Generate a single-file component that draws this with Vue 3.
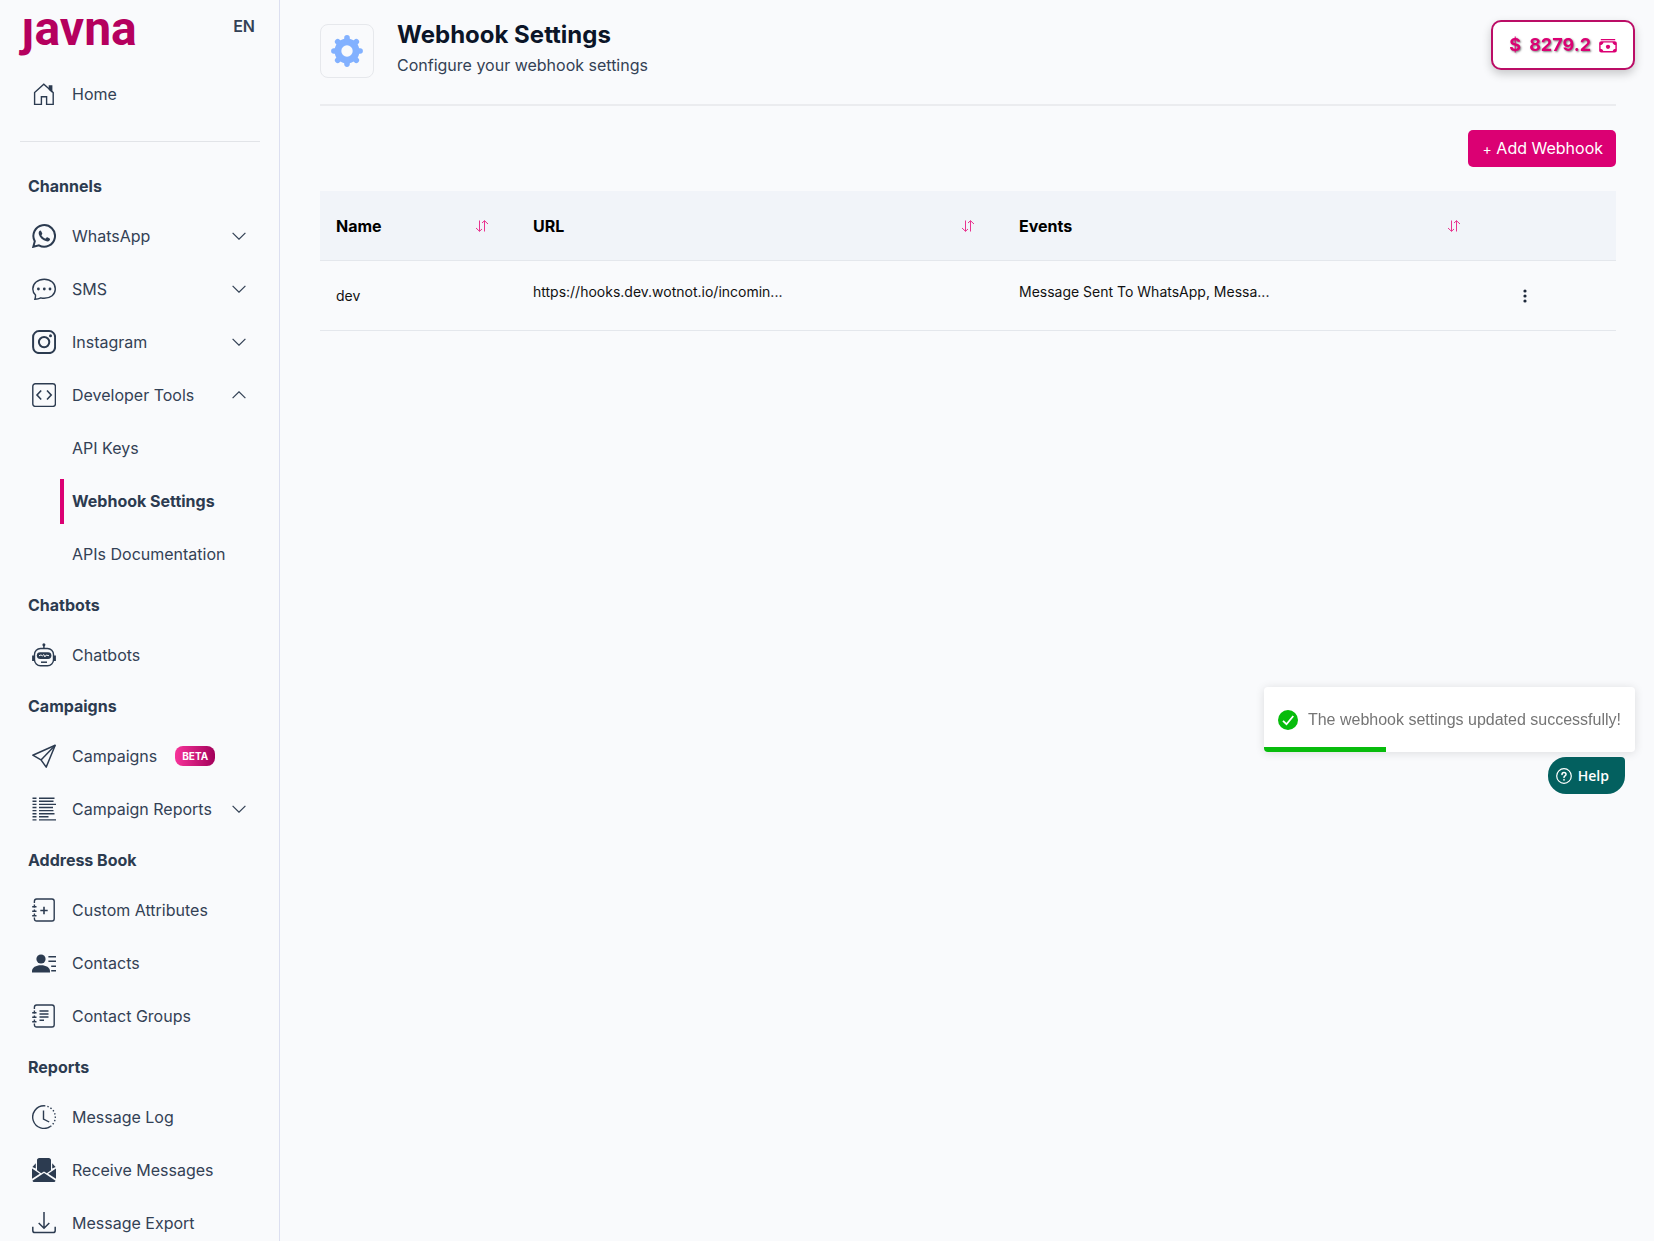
<script setup>
import { ref } from 'vue'

const icons = {
    home: '<path d="M2.6 22.4V10.6L11.8 2.3l9.4 8.3v11.8h-6.6v-7.6H9.4v7.6z"/><path d="M17.4 5.6V4h2.3v5.4l-2.3-2z" fill="currentColor"/>',
    whatsapp: '<path stroke-width="2" d="M1.3 22.8l1.5-5.6a10.8 10.8 0 1 1 4.1 4.1z"/><path fill="currentColor" stroke="none" d="M7.4 7.1c.6-.7 1.4-.7 1.8.1l1 2c.3.6-.1 1.1-.6 1.7-.3.4.1.9.8 1.7.8.9 1.7 1.5 2.6 1.9.5.2.8-.1 1.4-.8.4-.5.9-.4 1.5-.1l1.7.9c.7.4.5 1.1.1 1.7-.7 1-1.9 1.4-3.2 1.1-3.8-.9-6.7-3.7-7.6-6.8-.4-1.4-.2-2.6.5-3.4z"/>',
    sms: '<path d="M2.9 22.2c.5-1.5.7-2.9.6-4.2C1.7 16.3.8 14.2.8 12 .8 6.5 5.7 2.3 12.3 2.3S23.3 6.5 23.3 12s-4.7 9.3-11.2 9.3c-1.2 0-2.3-.2-3.3-.5-1.6.8-3.6 1.3-5.9 1.4z"/><g fill="currentColor" stroke="none"><circle cx="6.4" cy="12" r="1.4"/><circle cx="12.3" cy="12" r="1.4"/><circle cx="18" cy="12" r="1.4"/></g>',
    instagram: '<rect x="1.1" y="1.1" width="22" height="22" rx="6" stroke-width="2"/><circle cx="12.1" cy="12.1" r="5.2" stroke-width="2"/><circle cx="18.5" cy="5.7" r="1.5" fill="currentColor" stroke="none"/>',
    code: '<rect x=".8" y=".8" width="22.6" height="22.6" rx="2.5"/><path stroke-width="1.6" d="M9.2 7.5L5 12l4.2 4.5M15 7.5l4.2 4.5-4.2 4.5"/>',
    robot: '<rect x="2.5" y="5.5" width="19" height="17.2" rx="6"/><rect x="4.8" y="9.2" width="14.6" height="6.8" rx="3.4" fill="currentColor" stroke="none"/><path d="M11.9 1.5v4" stroke-width="1.5"/><circle cx="11.9" cy="1.8" r="1.5" fill="currentColor" stroke="none"/><path d="M1.1 12.5v5.5M22.9 12.5v5.5" stroke-width="2"/><path d="M9 19.2h6" stroke-width="1.5"/><path d="M7 12.8l2-.9 1.3 1 1.5-1.3 1.1 2.3 1.2-1.8 2.9.6" stroke="#f9fafc" stroke-width="1"/>',
    send: '<path stroke-linejoin="round" stroke-width="1.5" d="M.8 11.2L23.2 1.2 14.2 23.1 9 15.9z"/><path stroke-width="1.5" d="M9 15.9L23.2 1.2"/>',
    lines: '<path stroke-width="1.4" d="M.5 1.2h4M7 1.2h15.5M.5 4.3h4M7 4.3h14.5M.5 7.4h4M7 7.4h17M.5 10.5h4M7 10.5h14M.5 13.6h4M7 13.6h14.5M.5 16.7h4M7 16.7h15.5M.5 19.8h4M7 19.8h9.5M.5 22.9h4M7 22.9h17"/>',
    bookPlus: '<path d="M2.4 5V3.2c0-1.3.9-2.2 2.2-2.2h15.4c1.3 0 2.2.9 2.2 2.2v17.6c0 1.3-.9 2.2-2.2 2.2H4.6c-1.3 0-2.2-.9-2.2-2.2V19.4M2.4 6.5v3M2.4 11.5v2.3M2.4 15.5v2.3"/><path d="M.2 8.8h4.3M.2 13.3h4.3M.2 17.8h4.3" stroke-width="1.4"/><path d="M12 8.8v7.4M8.3 12.5h7.4" stroke-width="1.6"/>',
    contact: '<g fill="currentColor" stroke="none"><circle cx="9" cy="8" r="4.6"/><path d="M0 21.4v-1.2c0-3.6 3.9-5.9 9-5.9s9 2.3 9 5.9v1.2z"/></g><path d="M16.4 5.7H24M16.4 10.2H24M19.2 15.3H24M19.2 19.8H24" stroke-width="1.4"/>',
    bookLines: '<path d="M2.4 5V3.2c0-1.3.9-2.2 2.2-2.2h15.4c1.3 0 2.2.9 2.2 2.2v17.6c0 1.3-.9 2.2-2.2 2.2H4.6c-1.3 0-2.2-.9-2.2-2.2V19.4M2.4 6.5v3M2.4 11.5v2.3M2.4 15.5v2.3"/><path d="M.2 8.8h4.3M.2 13.3h4.3M.2 17.8h4.3" stroke-width="1.4"/><path d="M7.5 7h9M7.5 10h9M7.5 13h9M7.5 16.2h4.5"/>',
    clock: '<path d="M12 .8a11.3 11.3 0 1 0 6.7 20.4"/><path d="M12 .8a11.3 11.3 0 0 1 6.7 20.4" stroke-dasharray="1.4 2"/><path d="M11.5 5.5V14l5.7 3"/>',
    envelope: '<g fill="currentColor" stroke="none"><path d="M5 12.2V2.2C5 1 6 0 7.2 0h9.6C18 0 19 1 19 2.2v10l-4.2 3.1L12 13.6l-2.8 1.7z"/><path d="M3.8 5.2v5.2L.4 8.9zM20.2 5.2v5.2l3.4-1.5z"/><path d="M0 10.4l7.8 5.4L0 20.8zM24 10.4l-7.8 5.4 7.8 5zM12 15.1l11.6 7.6c-.4.8-1 1.3-1.9 1.3H2.3c-.9 0-1.5-.5-1.9-1.3z"/></g>',
    download: '<path d="M.8 15.8v3.7c0 1.3.8 2.1 2.1 2.1h18.2c1.3 0 2.1-.8 2.1-2.1v-3.7M12 1v16.2M6.7 12l5.3 5.3 5.3-5.3" stroke-width="1.5"/>'
}

const sections = [
    {
        title: 'Channels',
        items: [
            { label: 'WhatsApp', icon: 'whatsapp', children: [] },
            { label: 'SMS', icon: 'sms', children: [] },
            { label: 'Instagram', icon: 'instagram', children: [] },
            { label: 'Developer Tools', icon: 'code', children: ['API Keys', 'Webhook Settings', 'APIs Documentation'] }
        ]
    },
    { title: 'Chatbots', items: [{ label: 'Chatbots', icon: 'robot' }] },
    {
        title: 'Campaigns',
        items: [
            { label: 'Campaigns', icon: 'send', badge: 'BETA' },
            { label: 'Campaign Reports', icon: 'lines', children: [] }
        ]
    },
    {
        title: 'Address Book',
        items: [
            { label: 'Custom Attributes', icon: 'bookPlus' },
            { label: 'Contacts', icon: 'contact' },
            { label: 'Contact Groups', icon: 'bookLines' }
        ]
    },
    {
        title: 'Reports',
        items: [
            { label: 'Message Log', icon: 'clock' },
            { label: 'Receive Messages', icon: 'envelope' },
            { label: 'Message Export', icon: 'download' }
        ]
    }
]

const columns = ['Name', 'URL', 'Events']
const webhooks = ref([
    { name: 'dev', url: 'https://hooks.dev.wotnot.io/incomin...', events: 'Message Sent To WhatsApp, Messa...' }
])

const opened = ref('Developer Tools')
const current = ref('Webhook Settings')

function toggle(label) {
    opened.value = opened.value === label ? '' : label
}

function sort(column) {
    const key = column.toLowerCase()
    webhooks.value.sort((a, b) => a[key].localeCompare(b[key]))
}
</script>

<template>
    <div class="page">
        <aside class="sidebar">
            <div class="brand">
                <a class="logo" href="#" aria-label="javna">ȷavna</a>
                <button class="lang" type="button">EN</button>
            </div>
            <nav>
                <a class="item home" href="#">
                    <svg class="icon" viewBox="0 0 24 24" v-html="icons.home"></svg>
                    <span>Home</span>
                </a>
                <hr class="line">
                <section v-for="section in sections" :key="section.title">
                    <h2 class="heading">{{ section.title }}</h2>
                    <template v-for="item in section.items" :key="item.label">
                        <button v-if="item.children" class="item" type="button" :aria-expanded="opened === item.label"
                            @click="toggle(item.label)">
                            <svg class="icon" viewBox="0 0 24 24" v-html="icons[item.icon]"></svg>
                            <span>{{ item.label }}</span>
                            <svg class="chevron" :class="{ up: opened === item.label }" viewBox="0 0 14 8">
                                <path d="M.6.8L7 7.2 13.4.8" />
                            </svg>
                        </button>
                        <a v-else class="item" href="#">
                            <svg class="icon" viewBox="0 0 24 24" v-html="icons[item.icon]"></svg>
                            <span>{{ item.label }}</span>
                            <span v-if="item.badge" class="badge">{{ item.badge }}</span>
                        </a>
                        <template v-if="opened === item.label">
                            <div v-for="child in item.children" :key="child" class="sub">
                                <a href="#" :class="{ active: current === child }" @click.prevent="current = child">{{ child }}</a>
                            </div>
                        </template>
                    </template>
                </section>
            </nav>
        </aside>

        <main class="main">
            <header class="header">
                <div class="gear">
                    <svg viewBox="0 0 32 32">
                        <g fill="none" stroke="#82b1ff" stroke-linecap="round">
                            <circle cx="16" cy="16" r="9" stroke-width="7" />
                            <path stroke-width="5.6" d="M16 2.9v26.2M2.9 16h26.2M6.7 6.7l18.6 18.6M25.3 6.7L6.7 25.3" />
                        </g>
                        <circle cx="16" cy="16" r="5.7" fill="#f9fafc" />
                    </svg>
                </div>
                <div>
                    <h1>Webhook Settings</h1>
                    <p>Configure your webhook settings</p>
                </div>
            </header>
            <div class="actions">
                <button class="add" type="button"><span class="plus">+</span> Add Webhook</button>
            </div>
            <table class="table">
                <thead>
                    <tr>
                        <th v-for="column in columns" :key="column" :class="column.toLowerCase()">
                            <div class="th">
                                <span>{{ column }}</span>
                                <button class="sort" type="button" :aria-label="'Sort by ' + column" @click="sort(column)">
                                    <svg viewBox="0 0 14 12">
                                        <path d="M4.5.5v10.8M1 8l3.5 3.3L7 9M9.5 11.5V.7M7 3L9.5.7 13 4" />
                                    </svg>
                                </button>
                            </div>
                        </th>
                        <th></th>
                    </tr>
                </thead>
                <tbody>
                    <tr v-for="hook in webhooks" :key="hook.name">
                        <td>{{ hook.name }}</td>
                        <td><span class="cut">{{ hook.url }}</span></td>
                        <td><span class="cut">{{ hook.events }}</span></td>
                        <td>
                            <button class="more" type="button" aria-label="More">
                                <svg viewBox="0 0 4 14">
                                    <circle cx="2" cy="2" r="1.6" />
                                    <circle cx="2" cy="7" r="1.6" />
                                    <circle cx="2" cy="12" r="1.6" />
                                </svg>
                            </button>
                        </td>
                    </tr>
                </tbody>
            </table>
        </main>

        <div class="balance">
            <span>$</span>
            <span>8279.2</span>
            <svg viewBox="0 0 20 16">
                <path d="M2 1.5h16" stroke="#db0073" stroke-width="1.4" />
                <rect x="1" y="4" width="18" height="11" rx="1.5" fill="none" stroke="#db0073" stroke-width="1.6" />
                <circle cx="10" cy="9.5" r="2.4" fill="#db0073" />
                <path d="M1 4h4a4 4 0 0 1-4 3.5zM19 4h-4a4 4 0 0 0 4 3.5zM1 15h4a4 4 0 0 0-4-3.5zM19 15h-4a4 4 0 0 1 4-3.5z" fill="#db0073" />
            </svg>
        </div>

        <div class="toast" role="status">
            <svg viewBox="0 0 20 20">
                <circle cx="10" cy="10" r="10" fill="#07bc0c" />
                <path d="M5 10.8l3.5 3.4L15.3 6" fill="none" stroke="#fff" stroke-width="1.8" />
            </svg>
            <span>The webhook settings updated successfully!</span>
            <div class="progress"></div>
        </div>

        <button class="help" type="button">
            <svg viewBox="0 0 16 16">
                <g fill="none" stroke="#fff" stroke-linecap="round">
                    <circle cx="8" cy="8" r="7.3" stroke-width="1.2" />
                    <path d="M6 6.5C6 5.2 6.9 4.5 8 4.5s2 .8 2 1.9c0 1.5-2 1.5-2 3" stroke-width="1.5" />
                </g>
                <circle cx="8" cy="11.8" r=".9" fill="#fff" />
            </svg>
            Help
        </button>
    </div>
</template>

<style>
body {
    margin: 0;
    background: #fff;
}
</style>

<style scoped>
* {
    box-sizing: border-box;
}

button {
    font: inherit;
    color: inherit;
    border: none;
    background: none;
    padding: 0;
    cursor: pointer;
}

a {
    color: inherit;
    text-decoration: none;
}

.page {
    display: flex;
    height: 100vh;
    margin-right: 10px;
    background: #f9fafc;
    color: #334155;
    font-family: Inter, "Liberation Sans", sans-serif;
    font-size: 16px;
    line-height: 24px;
    overflow: hidden;
}

.sidebar {
    flex: 0 0 280px;
    border-right: 1px solid #dcdff0;
    overflow: hidden;
}

.brand {
    display: flex;
    justify-content: space-between;
    align-items: flex-start;
    padding: 18px 24px 0 21px;
}

.logo {
    height: 38px;
    color: #b5005e;
    font-family: Roboto, sans-serif;
    font-size: 48px;
    font-weight: 700;
    line-height: 22px;
}

.lang {
    font-weight: 600;
    line-height: 16px;
}

.item {
    display: flex;
    align-items: center;
    gap: 16px;
    width: 100%;
    height: 53px;
    padding: 0 33px 2px 32px;
    text-align: left;
}

.home {
    margin-top: 12px;
}

.icon {
    flex: none;
    width: 24px;
    height: 24px;
    fill: none;
    stroke: currentColor;
    stroke-width: 1.4;
    color: #2c3b50;
}

.chevron {
    width: 14px;
    height: 8px;
    margin-left: auto;
    fill: none;
    stroke: #334155;
    stroke-width: 1.2;
}

.chevron.up {
    transform: rotate(180deg);
}

.line {
    margin: 20px 19px 20px 20px;
    border: none;
    border-top: 1px solid #e2e4e8;
}

.heading {
    margin: 0;
    padding-left: 28px;
    color: #2c3b50;
    font-size: 16px;
    font-weight: 700;
    line-height: 48px;
}

.badge {
    margin-left: 2px;
    padding: 0 7px;
    border-radius: 8px;
    background: linear-gradient(90deg, #f7339a, #a3005a);
    color: #fff;
    font-size: 10px;
    font-weight: 700;
    line-height: 20px;
}

.sub {
    display: flex;
    align-items: center;
    height: 53px;
    padding-left: 60px;
}

.sub a {
    padding-left: 8px;
    border-left: 4px solid transparent;
    line-height: 45px;
}

.sub .active {
    border-color: #db0073;
    color: #2c3b50;
    font-weight: 700;
}

.main {
    flex: 1;
    min-width: 0;
    padding: 0 38px 0 40px;
}

.header {
    display: flex;
    gap: 23px;
    height: 106px;
    padding-top: 24px;
    border-bottom: 2px solid #ebecef;
}

.gear {
    display: grid;
    place-items: center;
    width: 54px;
    height: 54px;
    border: 1px solid #e6e8ec;
    border-radius: 8px;
}

.gear svg {
    width: 32px;
    height: 32px;
}

h1 {
    margin: 0;
    color: #0b1528;
    font-size: 24px;
    font-weight: 700;
    line-height: 22px;
}

.header p {
    margin: 8px 0 0;
    line-height: 22px;
}

.actions {
    display: flex;
    justify-content: flex-end;
    padding: 24px 0;
}

.add {
    height: 37px;
    padding: 0 13px 0 15px;
    border-radius: 5px;
    background: #db0073;
    color: #fff;
}

.plus {
    font-size: 14px;
}

.table {
    width: 100%;
    table-layout: fixed;
    border-spacing: 0;
    color: #111;
    font-size: 14px;
}

.table th,
.table td {
    height: 70px;
    padding: 0 16px;
    border-bottom: 1px solid #e4e7ec;
    text-align: left;
}

.table th {
    background: #f1f4f9;
    color: #000;
    font-size: 16px;
    font-weight: 700;
}

.name {
    width: 15.2%;
}

.url,
.events {
    width: 37.5%;
}

.th {
    display: flex;
    justify-content: space-between;
    padding-right: 12px;
}

.sort {
    display: flex;
    align-items: center;
}

.sort svg {
    width: 14px;
    height: 12px;
    fill: none;
    stroke: #e8338f;
}

.cut {
    display: inline-block;
    max-width: 260px;
    overflow: hidden;
    white-space: nowrap;
}

.more {
    display: flex;
    align-items: center;
    justify-content: center;
    width: 40px;
    height: 24px;
}

.more svg {
    height: 14px;
    fill: #1e293b;
}

.balance {
    position: fixed;
    top: 20px;
    right: 29px;
    display: flex;
    align-items: center;
    gap: 8px;
    height: 50px;
    padding: 0 16px;
    border: 2px solid #bb0d66;
    border-radius: 10px;
    background: #fff;
    box-shadow: 0 4px 10px rgba(0, 0, 0, 0.2);
    color: #db0073;
    font-size: 18px;
    font-weight: 700;
    text-shadow: 1px 1px 2px rgba(0, 0, 0, 0.5);
}

.balance svg {
    width: 18px;
    height: 15px;
}

.toast {
    position: fixed;
    right: 29px;
    bottom: 489px;
    display: flex;
    align-items: center;
    gap: 10px;
    height: 65px;
    padding: 0 14px;
    border-radius: 4px;
    background: #fff;
    box-shadow: 0 1px 10px rgba(0, 0, 0, 0.12);
    color: #757575;
    font-family: "Liberation Sans", sans-serif;
    overflow: hidden;
}

.toast svg {
    width: 20px;
    height: 20px;
}

.progress {
    position: absolute;
    left: 0;
    bottom: 0;
    width: 33%;
    height: 5px;
    background: #07bc0c;
}

.help {
    position: fixed;
    right: 39px;
    bottom: 447px;
    display: flex;
    align-items: center;
    gap: 6px;
    height: 37px;
    padding: 0 16px 0 8px;
    border-radius: 18px 4px 18px 18px;
    background: #03605f;
    color: #fff;
    font-family: "Open Sans", sans-serif;
    font-size: 14px;
    font-weight: 600;
}

.help svg {
    width: 16px;
    height: 16px;
}
</style>
